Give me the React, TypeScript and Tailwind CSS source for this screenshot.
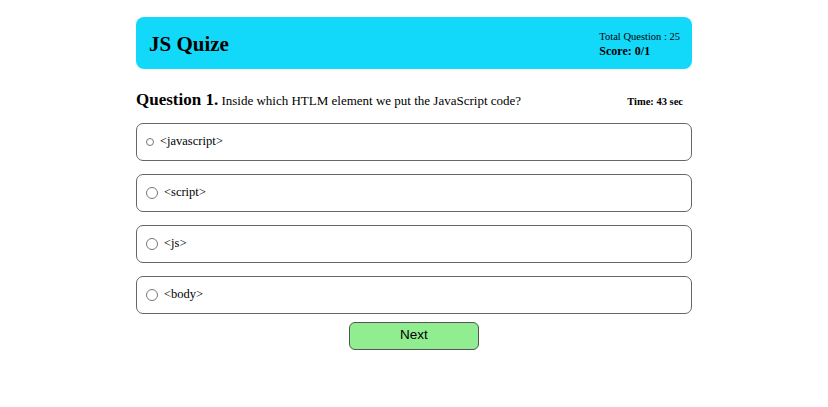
import React, { useState } from "react";

const options = ["<javascript>", "<script>", "<js>", "<body>"];

const App = () => {
  const [selected, setSelected] = useState<number | null>(null);

  return (
    <div className="min-h-screen bg-white font-['Liberation_Serif',serif] text-black">
      <div className="mx-auto w-[556px] pt-[17px]">
        {/* header */}
        <div className="flex h-[52px] items-center justify-between rounded-lg bg-[#12d9fa] pl-[13px] pr-[12px]">
          <h1 className="pt-[3px] text-[21px] font-bold">JS Quize</h1>
          <div className="flex flex-col pt-[2px] leading-[14px]">
            <span className="text-[10.5px]">Total Question : 25</span>
            <span className="text-[12px] font-bold">Score: 0/1</span>
          </div>
        </div>

        {/* question */}
        <div className="mt-[18px] flex items-baseline justify-between pr-[9px]">
          <p className="text-[13px]">
            <span className="text-[17px] font-bold">Question 1.</span> Inside which HTLM element we put the JavaScript code?
          </p>
          <span className="text-[10.5px] font-bold">Time: 43 sec</span>
        </div>

        {/* options */}
        <div className="mt-[10px] flex flex-col gap-[13px]">
          {options.map((opt, i) => (
            <label
              key={opt}
              className="flex h-[38px] cursor-pointer items-center gap-[6px] rounded-[7px] border border-[#666] px-[9px] text-[12.5px]"
            >
              <input
                type="radio"
                name="answer"
                checked={selected === i}
                onChange={() => setSelected(i)}
                className={i === 0 ? "m-0 h-[8px] w-[8px]" : "m-0 h-[12px] w-[12px]"}
              />
              <span>{opt}</span>
            </label>
          ))}
        </div>

        <div className="mt-[8px] flex justify-center">
          <button className="h-[28px] w-[130px] rounded-md border border-[#555] bg-[#90ee90] font-['Liberation_Sans',sans-serif] text-[13.5px]">
            Next
          </button>
        </div>
      </div>
    </div>
  );
};

export default App;
